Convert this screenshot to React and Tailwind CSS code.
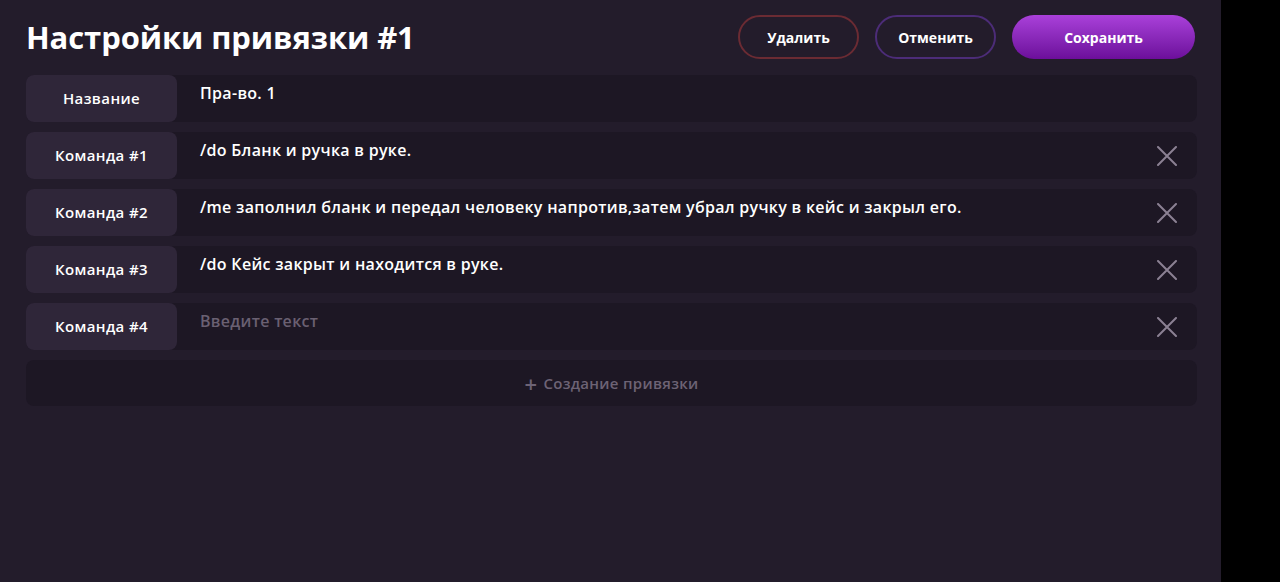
import React, { useState } from 'react';

const commands = [
  '/do Бланк и ручка в руке.',
  '/me заполнил бланк и передал человеку напротив,затем убрал ручку в кейс и закрыл его.',
  '/do Кейс закрыт и находится в руке.',
  '',
];

function CloseIcon(){
  return (
    <svg width="20" height="20" viewBox="0 0 20 20" fill="none">
      <path d="M1 1L19 19M19 1L1 19" stroke="#8b8193" strokeWidth="2" strokeLinecap="round" />
    </svg>
  );
}

function Row({ label, value, placeholder, removable }){
  return (
    <div className="flex h-[47px] rounded-[8px] bg-[#1d1724]">
      <div className="w-[151px] shrink-0 rounded-[8px] bg-[#2f2639] flex items-center justify-center text-[15px] font-semibold tracking-[0.4px] text-white">{label}</div>
      <div className="flex-1 pl-[23px] pt-[6px] text-[16px] font-semibold tracking-[0.3px]">
        {value ? <span className="text-white">{value}</span> : <span className="text-[#6a6072]">{placeholder}</span>}
      </div>
      {removable && (
        <button className="w-[60px] flex items-center justify-center"><CloseIcon /></button>
      )}
    </div>
  );
}

export default function App(){
  const [rows] = useState(commands);

  return (
    <div className="flex h-[582px] w-[1280px] bg-black" style={{ fontFamily: '"Open Sans", sans-serif' }}>
      <div className="w-[1221px] h-full bg-[#231c2b] pl-[26px] pr-[24px]">
        <div className="flex items-center justify-between h-[75px] pb-[1px]">
          <h1 className="text-[31px] font-bold text-white tracking-[-0.1px]">Настройки привязки #1</h1>
          <div className="flex gap-4 pr-[2px]">
            <button className="w-[121px] h-[44px] rounded-full border-2 border-[#6b2b33] text-white text-[14px] font-bold">Удалить</button>
            <button className="w-[121px] h-[44px] rounded-full border-2 border-[#4c2c78] text-white text-[14px] font-bold">Отменить</button>
            <button className="w-[183px] h-[44px] rounded-full bg-gradient-to-b from-[#aa40da] to-[#6c0e9b] text-white text-[14px] font-bold">Сохранить</button>
          </div>
        </div>

        <div className="flex flex-col gap-[10px]">
          <Row label="Название" value="Пра-во. 1" />
          {rows.map((c, i) => (
            <Row key={i} label={`Команда #${i + 1}`} value={c} placeholder="Введите текст" removable />
          ))}
          <button className="h-[46px] rounded-[8px] bg-[#1d1724] flex items-center justify-center gap-[6px] text-[15px] font-semibold tracking-[0.3px] text-[#6d6375]">
            <span className="text-[22px] leading-none font-semibold">+</span>
            Создание привязки
          </button>
        </div>
      </div>
    </div>
  );
}
